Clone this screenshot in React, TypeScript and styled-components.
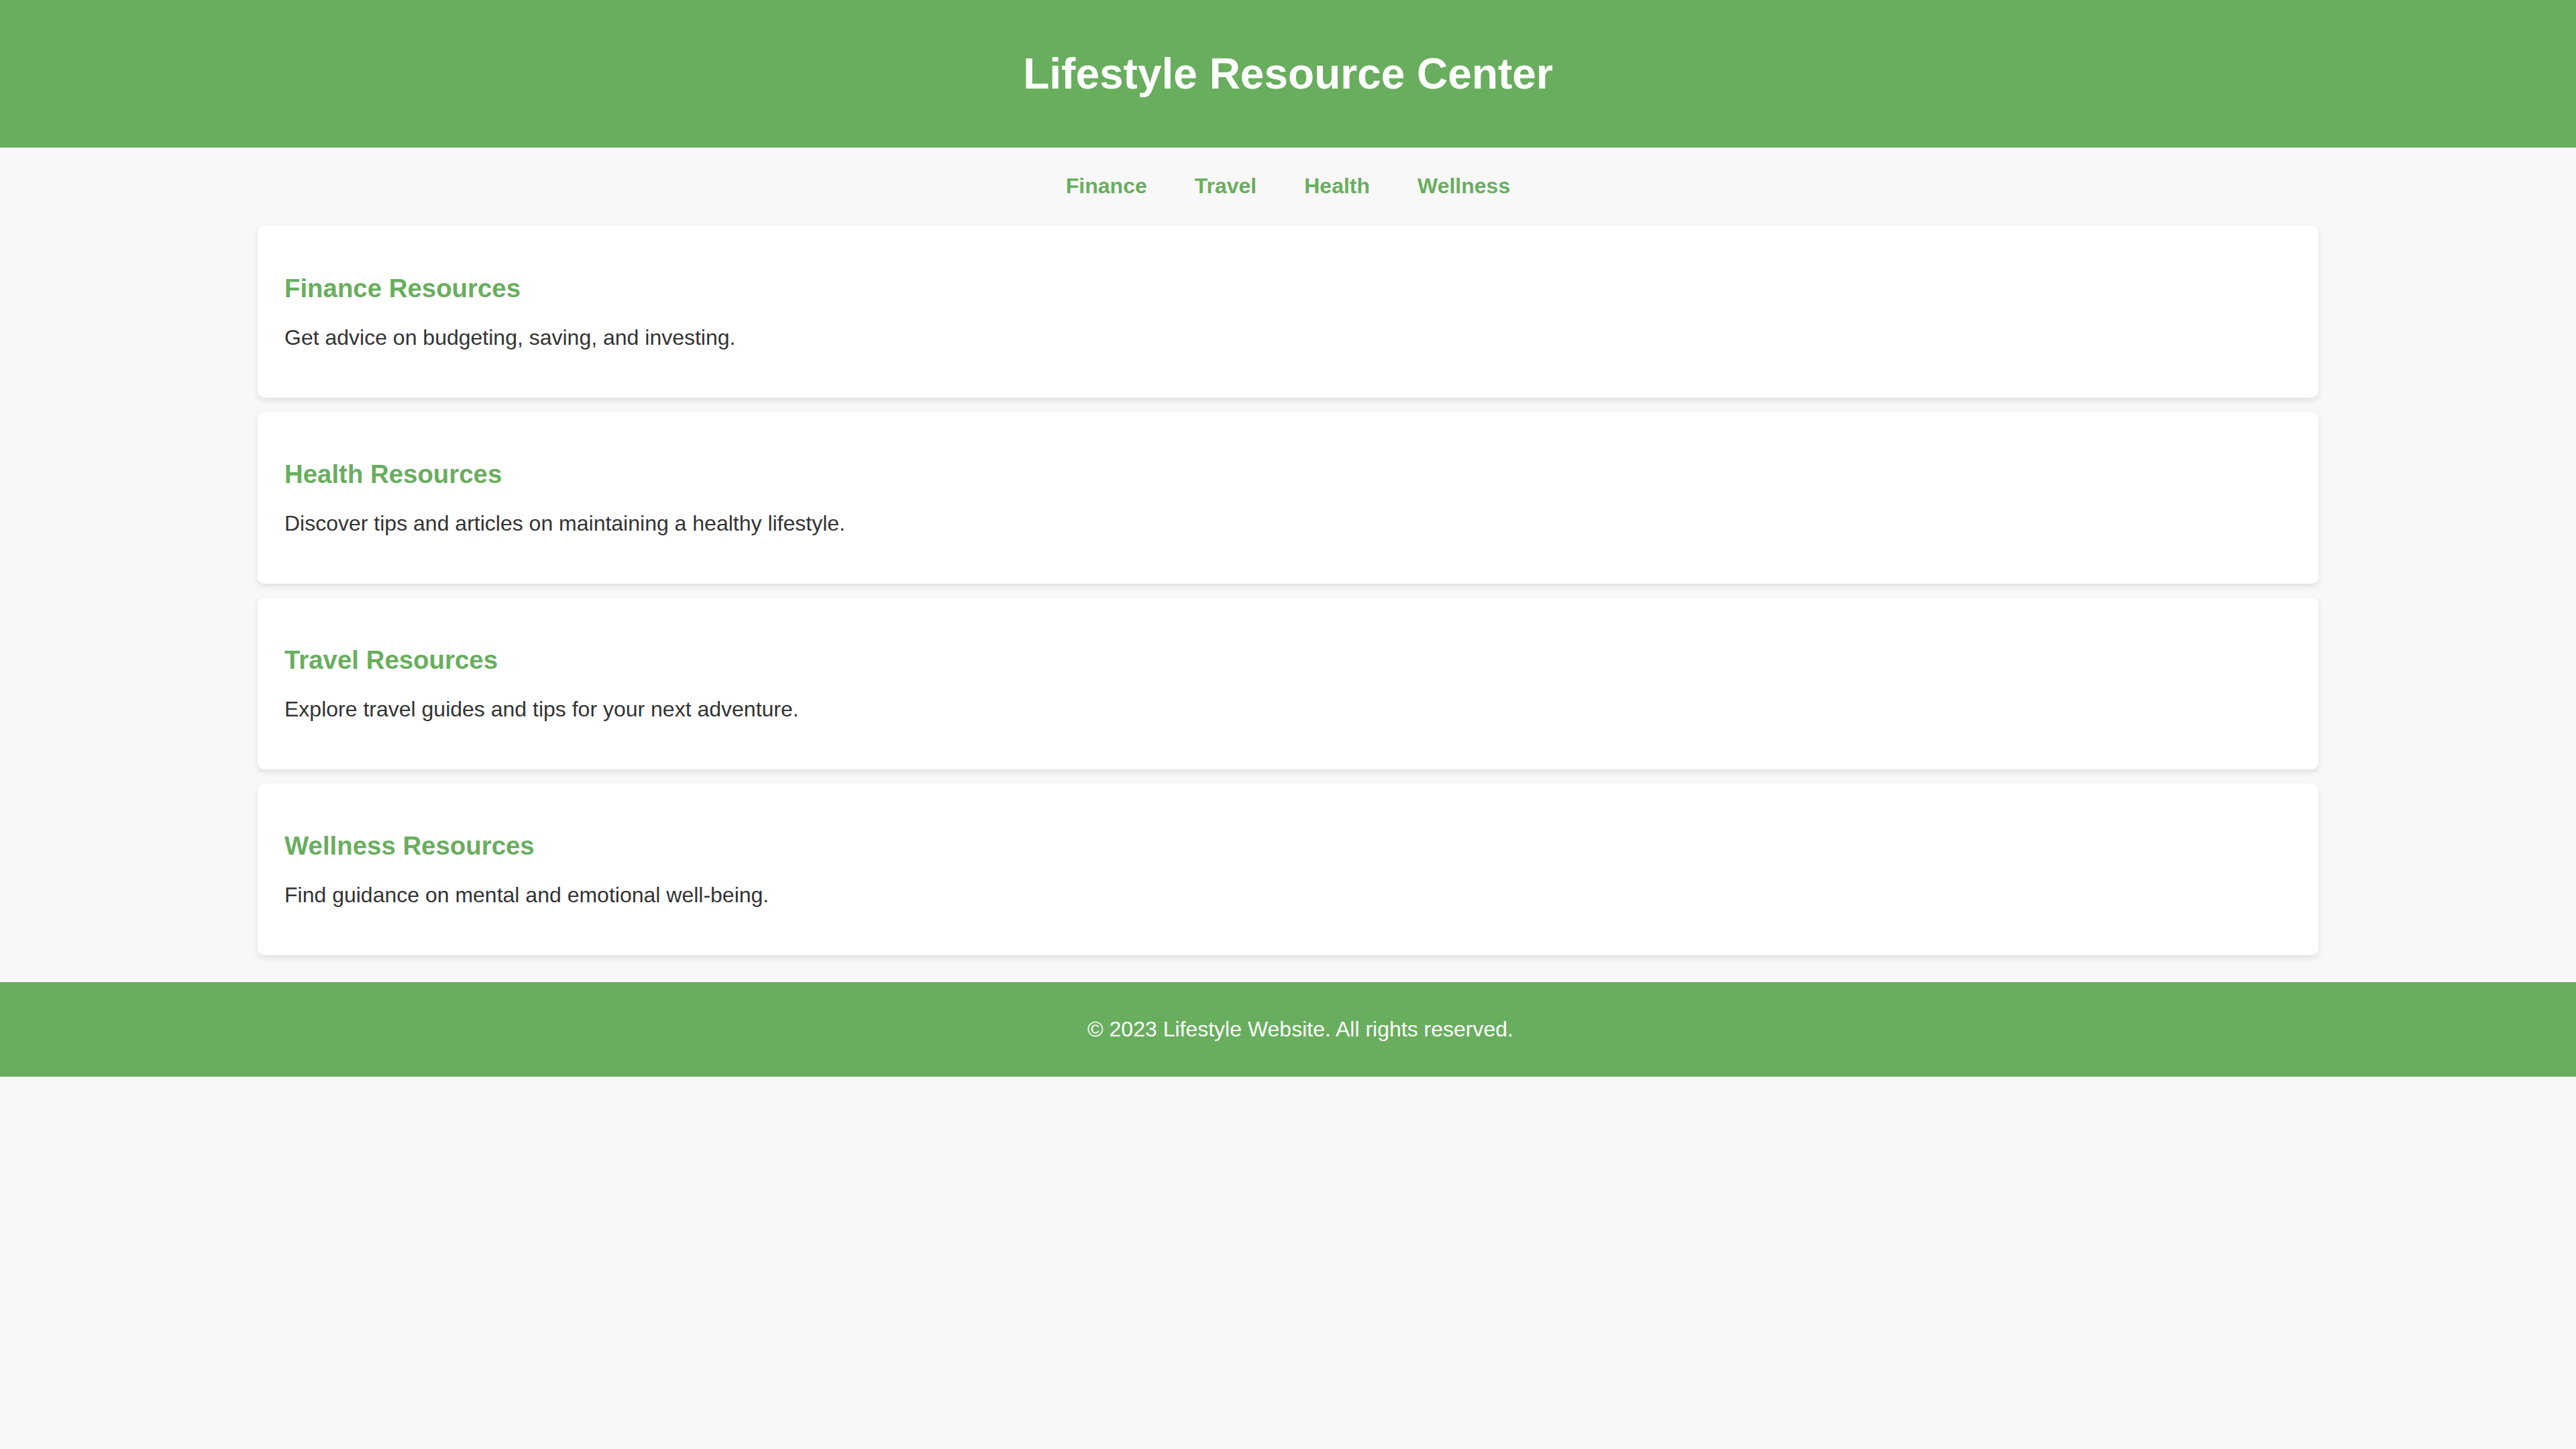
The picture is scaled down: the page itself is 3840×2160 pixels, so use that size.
import styled, { createGlobalStyle } from 'styled-components'

const GREEN = '#69ae5e'

const GlobalStyle = createGlobalStyle`
  html, body {
    margin: 0;
    padding: 0;
    background: #f8f8f8;
    font-family: 'Liberation Sans', Arial, Helvetica, sans-serif;
    color: #333;
  }
`

const Header = styled.header`
  background: ${GREEN};
  color: #fff;
  text-align: center;
  padding: 73px 0;
`

const Title = styled.h1`
  margin: 0;
  font-size: 64px;
  font-weight: 700;
  line-height: 74px;
`

const Nav = styled.nav`
  display: flex;
  justify-content: center;
  gap: 71px;
  padding: 39px 0 41px;
`

const NavLink = styled.a`
  color: ${GREEN};
  font-size: 32px;
  font-weight: 700;
  line-height: 37px;
  text-decoration: none;
`

const Main = styled.main`
  width: 3072px;
  margin: 0 auto;
  padding-bottom: 40px;
  display: flex;
  flex-direction: column;
  gap: 21px;
`

const Card = styled.section`
  background: #fff;
  border-radius: 10px;
  box-shadow: 0 4px 10px rgba(0, 0, 0, 0.1);
  padding: 40px;
`

const CardTitle = styled.h2`
  color: ${GREEN};
  font-size: 38.4px;
  font-weight: 700;
  line-height: 44px;
  margin: 31px 0 0;
`

const CardText = styled.p`
  font-size: 32px;
  line-height: 37px;
  margin: 33px 0 31px;
`

const Footer = styled.footer`
  background: ${GREEN};
  color: #fff;
  text-align: center;
  padding: 52px 0 52px 37px;
  font-size: 32px;
  line-height: 37px;
`

const navItems = ['Finance', 'Travel', 'Health', 'Wellness']

const resources = [
  { title: 'Finance Resources', text: 'Get advice on budgeting, saving, and investing.' },
  { title: 'Health Resources', text: 'Discover tips and articles on maintaining a healthy lifestyle.' },
  { title: 'Travel Resources', text: 'Explore travel guides and tips for your next adventure.' },
  { title: 'Wellness Resources', text: 'Find guidance on mental and emotional well-being.' }
]

const App = () => (
  <>
    <GlobalStyle />
    <Header>
      <Title>Lifestyle Resource Center</Title>
    </Header>
    <Nav>
      {navItems.map((item) => (
        <NavLink key={item} href={`#${item.toLowerCase()}`}>
          {item}
        </NavLink>
      ))}
    </Nav>
    <Main>
      {resources.map((r) => (
        <Card key={r.title}>
          <CardTitle>{r.title}</CardTitle>
          <CardText>{r.text}</CardText>
        </Card>
      ))}
    </Main>
    <Footer>© 2023 Lifestyle Website. All rights reserved.</Footer>
  </>
)

export default App
